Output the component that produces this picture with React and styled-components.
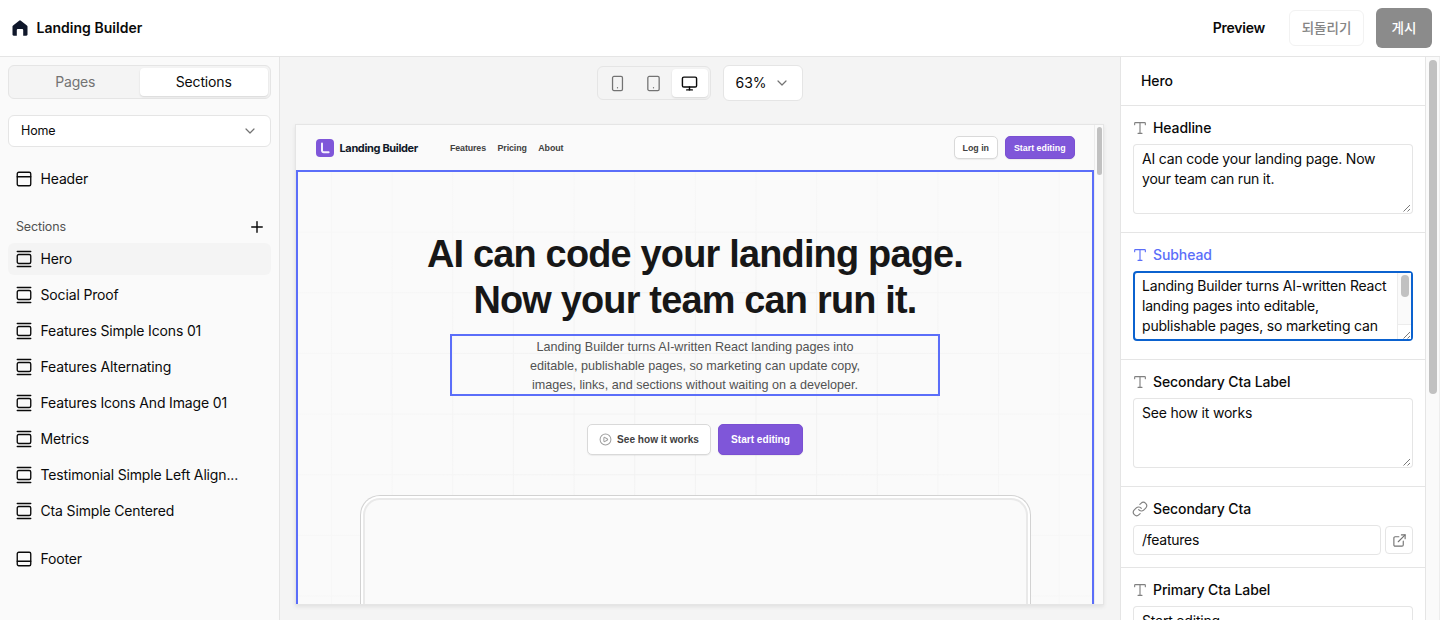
import React from 'react';
import styled, {createGlobalStyle, css} from 'styled-components';
import {
  ChevronDown,
  CirclePlay,
  ExternalLink,
  GalleryVertical,
  Link,
  Monitor,
  PanelBottom,
  PanelTop,
  Plus,
  Smartphone,
  Tablet,
  Type
} from 'lucide-react';

const BORDER_COLOR = "#e5e5e5";
const TEXT_COLOR = "#0a0a0a";
const MUTED_COLOR = "#737373";
const SELECT_COLOR = "#5b6ef9";
const BRAND_COLOR = "#7f56d9";

const GlobalStyle = createGlobalStyle`
  * {
    box-sizing: border-box;
  }
  body {
    margin: 0;
    overflow: hidden;
    color: ${TEXT_COLOR};
    font-family: Inter, "Noto Sans CJK KR", sans-serif;
    font-size: 14px;
    line-height: 20px;
  }
  svg {
    display: block;
    flex-shrink: 0;
  }
`;

const Page = styled.div`
  height: 620px;
  display: flex;
  flex-direction: column;
  overflow: hidden;
`;

const TopBar = styled.header`
  height: 57px;
  flex-shrink: 0;
  display: flex;
  align-items: center;
  justify-content: space-between;
  padding: 0 8px 0 12px;
  border-bottom: 1px solid ${BORDER_COLOR};
  background: #fff;
`;

const Brand = styled.div`
  display: flex;
  align-items: center;
  gap: 8.5px;
  font-weight: 600;
  letter-spacing: 0.02px;
`;

const TopActions = styled.div`
  display: flex;
  align-items: center;
`;

const PreviewLink = styled.span`
  font-weight: 600;
  letter-spacing: -0.25px;
  margin-right: 24px;
`;

const RevertButton = styled.button`
  width: 75px;
  height: 36px;
  margin-right: 12px;
  padding: 0 0 2px;
  border: 1px solid #f2f2f2;
  border-radius: 6px;
  background: #fff;
  color: #858585;
  font: 500 13.5px/20px "Noto Sans CJK KR", sans-serif;
`;

const PublishButton = styled.button`
  width: 56px;
  height: 40px;
  padding: 0 0 2px;
  border: 0;
  border-radius: 6px;
  background: #8b8b8b;
  color: #fff;
  font: 500 13.5px/20px "Noto Sans CJK KR", sans-serif;
`;

const Body = styled.div`
  flex: 1;
  min-height: 0;
  display: flex;
`;

// Left sidebar

const Sidebar = styled.aside`
  width: 280px;
  flex-shrink: 0;
  padding: 8px;
  border-right: 1px solid ${BORDER_COLOR};
  background: #fafafa;
  letter-spacing: -0.15px;
`;

const Tabs = styled.div`
  height: 34px;
  display: flex;
  padding: 2px;
  border: 1px solid ${BORDER_COLOR};
  border-radius: 6px;
  background: #f4f4f4;
`;

const Tab = styled.div`
  flex: 1;
  display: flex;
  align-items: center;
  justify-content: center;
  border-radius: 4px;
  color: ${MUTED_COLOR};
  ${props => props.$active && css`
    color: ${TEXT_COLOR};
    background: #fff;
    box-shadow: 0 1px 2px rgba(0, 0, 0, 0.12);
  `}
`;

const PageSelect = styled.div`
  height: 32px;
  margin: 16px 0;
  padding: 0 12px;
  display: flex;
  align-items: center;
  justify-content: space-between;
  border: 1px solid ${BORDER_COLOR};
  border-radius: 6px;
  background: #fff;
  font-size: 12.5px;
`;

const SectionRow = styled.div`
  height: 32px;
  display: flex;
  align-items: center;
  gap: 7.5px;
  padding: 0 8px 0 7px;
  border-radius: 6px;
  background: ${props => props.$active ? "#f4f4f4" : "transparent"};
`;

const ListHeading = styled.div`
  height: 32px;
  margin-top: 16px;
  padding: 0 5px 0 8px;
  display: flex;
  align-items: center;
  justify-content: space-between;
  color: #525252;
  font-size: 12.5px;
`;

const SectionList = styled.div`
  display: flex;
  flex-direction: column;
  gap: 4px;
  margin-bottom: 16px;
`;

// Canvas

const Canvas = styled.main`
  flex: 1;
  min-width: 0;
  display: flex;
  flex-direction: column;
  align-items: center;
  padding: 8px 16px 15px 15px;
  background: #f4f4f4;
`;

const Toolbar = styled.div`
  height: 36px;
  flex-shrink: 0;
  display: flex;
  align-items: center;
  gap: 12px;
  margin-bottom: 23px;
`;

const DeviceGroup = styled.div`
  height: 34px;
  width: 114px;
  padding: 2px;
  display: flex;
  border: 1px solid ${BORDER_COLOR};
  border-radius: 6px;
`;

const DeviceButton = styled.div`
  flex: 1;
  display: flex;
  align-items: center;
  justify-content: center;
  border-radius: 4px;
  color: ${MUTED_COLOR};
  ${props => props.$active && css`
    color: ${TEXT_COLOR};
    background: #fff;
    box-shadow: 0 1px 2px rgba(0, 0, 0, 0.12);
  `}
`;

const ZoomButton = styled.div`
  width: 80px;
  height: 36px;
  padding: 0 12px;
  display: flex;
  align-items: center;
  justify-content: space-between;
  border: 1px solid ${BORDER_COLOR};
  border-radius: 6px;
  background: #fff;
`;

const Frame = styled.div`
  width: 809px;
  flex: 1;
  min-height: 0;
  display: flex;
  border: 1px solid ${BORDER_COLOR};
  background: #fafafa;
  box-shadow: 0 2px 4px rgba(0, 0, 0, 0.08);
  font-family: "Liberation Sans", Arial, sans-serif;
`;

const Site = styled.div`
  width: 798px;
  flex-shrink: 0;
  display: flex;
  flex-direction: column;
  overflow: hidden;
`;

const FrameScroll = styled.div`
  width: 9px;
  padding: 2px 0 0 1.5px;
  border-left: 1px solid #ececec;
`;

const FrameThumb = styled.div`
  width: 5px;
  height: 48px;
  border-radius: 3px;
  background: #c1c1c1;
`;

const SiteHeader = styled.div`
  height: 45px;
  flex-shrink: 0;
  display: flex;
  align-items: center;
  padding: 0 19.5px 0 20px;
`;

const SiteName = styled.span`
  margin: 1px 32px 0 5.5px;
  color: #101828;
  font: 700 11px/16px Inter, sans-serif;
  letter-spacing: -0.36px;
`;

const SiteNav = styled.nav`
  flex: 1;
  display: flex;
  gap: 11.5px;
  color: #414141;
  font-size: 8.85px;
  font-weight: 700;
  letter-spacing: -0.1px;
`;

const SiteButton = styled.button`
  height: ${props => props.$large ? 31 : 23}px;
  width: ${props => props.$width}px;
  padding: 0;
  display: flex;
  align-items: center;
  justify-content: center;
  gap: 5px;
  border: 1px solid ${props => props.$primary ? "#7a50d2" : "#d9d9d9"};
  border-radius: 5px;
  background: ${props => props.$primary ? BRAND_COLOR : "#fff"};
  color: ${props => props.$primary ? "#fff" : "#414141"};
  box-shadow: 0 1px 1px rgba(0, 0, 0, 0.06);
  font: 700 ${props => props.$large ? 10.1 : 8.85}px/16px "Liberation Sans", Arial, sans-serif;
`;

const HeaderButtons = styled.div`
  display: flex;
  gap: 7px;
`;

const Hero = styled.section`
  flex: 1;
  min-height: 0;
  display: flex;
  flex-direction: column;
  align-items: center;
  padding-top: 60px;
  overflow: hidden;
  border: 2px solid ${SELECT_COLOR};
  border-bottom: 0;
  background-image:
    radial-gradient(closest-side, transparent 40%, rgba(250, 250, 250, 0.6) 100%),
    linear-gradient(to right, #f2f2f2 1px, transparent 1px),
    linear-gradient(to bottom, #f2f2f2 1px, transparent 1px);
  background-size: 100% 100%, 60.65px 60.65px, 60.65px 60.65px;
  background-position: 0 0, 33px -1px, 33px -1px;
`;

const Headline = styled.h1`
  margin: 0;
  color: #171717;
  font-size: 37.9px;
  line-height: 45.5px;
  font-weight: 700;
  text-align: center;
  white-space: nowrap;
  letter-spacing: -0.8px;
`;

const Subhead = styled.p`
  width: 490px;
  height: 62px;
  margin: 11px 0 28px;
  padding-top: 2px;
  border: 2px solid ${SELECT_COLOR};
  color: #525252;
  font-size: 12.6px;
  line-height: 19px;
  text-align: center;
`;

const CtaRow = styled.div`
  display: flex;
  gap: 7px;
  margin-bottom: 40px;
`;

const Mockup = styled.div`
  width: 671px;
  flex: 1;
  padding: 2px 2px 0;
  border: 1px solid #d2d2d2;
  border-bottom: 0;
  border-radius: 20px 20px 0 0;
  background: #fff;
`;

const MockupScreen = styled.div`
  height: 100%;
  border: 2px solid #e9e9e9;
  border-bottom: 0;
  border-radius: 17px 17px 0 0;
  background: #fafafa;
`;

// Inspector

const Inspector = styled.aside`
  width: 305px;
  flex-shrink: 0;
  overflow: hidden;
  border-left: 1px solid ${BORDER_COLOR};
  background: #fff;
`;

const InspectorTitle = styled.div`
  height: 49px;
  display: flex;
  align-items: center;
  padding-left: 20px;
  border-bottom: 1px solid ${BORDER_COLOR};
  font-weight: 500;
  letter-spacing: -0.1px;
`;

const FieldBlock = styled.div`
  padding: 12px 12px ${props => props.$compact ? 12 : 18}px;
  border-bottom: 1px solid ${BORDER_COLOR};
`;

const FieldLabel = styled.div`
  display: flex;
  align-items: center;
  gap: 5px;
  margin-bottom: 6px;
  font-weight: 500;
  letter-spacing: -0.1px;
  color: ${props => props.$selected ? SELECT_COLOR : TEXT_COLOR};
  svg {
    margin-left: -1px;
    color: ${props => props.$selected ? SELECT_COLOR : "#808080"};
  }
`;

const TextArea = styled.div`
  position: relative;
  width: 280px;
  height: 70px;
  padding: 5px 9px;
  overflow: hidden;
  white-space: pre;
  letter-spacing: -0.19px;
  border-radius: 4px;
  box-shadow: inset 0 0 0 ${props => props.$focused ? "2px #0b62cf" : `1px ${BORDER_COLOR}`};
`;

const ResizeGrip = styled.svg`
  position: absolute;
  right: 2px;
  bottom: 2px;
`;

const AreaScroll = styled.div`
  position: absolute;
  top: 2px;
  right: 2px;
  bottom: 2px;
  width: 14px;
  padding: 2px 0 0 3px;
  border-left: 1px solid #ececec;
  background: linear-gradient(#fafafa 51px, #ececec 51px, #ececec 52px, #fff 52px);
`;

const AreaThumb = styled.div`
  width: 8px;
  height: 22px;
  border-radius: 4px;
  background: #c1c1c1;
`;

const LinkRow = styled.div`
  display: flex;
  align-items: center;
  gap: 4px;
`;

const Input = styled.div`
  width: 248px;
  height: 30px;
  padding: 4px 8px;
  border: 1px solid ${BORDER_COLOR};
  border-radius: 4px;
  letter-spacing: -0.25px;
`;

const OpenButton = styled.div`
  width: 28px;
  height: 28px;
  display: flex;
  align-items: center;
  justify-content: center;
  border: 1px solid ${BORDER_COLOR};
  border-radius: 4px;
  color: ${MUTED_COLOR};
`;

const PanelScroll = styled.div`
  width: 15px;
  flex-shrink: 0;
  padding: 3px 0 0 3px;
  border-left: 1px solid ${BORDER_COLOR};
  border-right: 1px solid #ededed;
  background: #fafafa;
`;

const PanelThumb = styled.div`
  width: 8px;
  height: 334px;
  border-radius: 4px;
  background: #c1c1c1;
`;

const SECTIONS = [
  "Hero",
  "Social Proof",
  "Features Simple Icons 01",
  "Features Alternating",
  "Features Icons And Image 01",
  "Metrics",
  "Testimonial Simple Left Align...",
  "Cta Simple Centered"
];

const HomeIcon = () => (
    <svg width="16" height="16" viewBox="0 0 16 16">
      <path fill="#0f172a" d="M7.1.7a1.5 1.5 0 0 1 1.8 0l6 4.7c.4.3.6.7.6 1.2v7.900c0 .7-.5 1.200-1.200 1.200h-3.100V10.200c0-.8-.5-1.300-1.300-1.300H6.100c-.8 0-1.300.5-1.300 1.300v5.500H1.700c-.7 0-1.200-.5-1.200-1.200V6.600c0-.5.2-.9.6-1.200z"/>
    </svg>
);

const SiteLogo = () => (
    <svg width="18" height="18" viewBox="0 0 18 18">
      <rect width="18" height="18" rx="4" fill={BRAND_COLOR}/>
      <path d="M6 4.500v7a1.700 1.700 0 0 0 1.700 1.700h4.900" fill="none" stroke="#f4efff" strokeWidth="2" strokeLinecap="round"/>
    </svg>
);

const Grip = () => (
    <ResizeGrip width="8" height="8" viewBox="0 0 8 8">
      <path d="M0.500 7.500L7 1M4.500 7.500L7 5" stroke="#6b6b6b" strokeWidth="0.900" fill="none"/>
    </ResizeGrip>
);

const Field = ({label, selected, children, compact, icon: Icon = Type}) => (
    <FieldBlock $compact={compact}>
      <FieldLabel $selected={selected}>
        <Icon size={16} strokeWidth={1.7}/>
        {label}
      </FieldLabel>
      {children}
    </FieldBlock>
);

const SectionsPanel = () => (
    <Sidebar>
      <Tabs>
        <Tab>Pages</Tab>
        <Tab $active>Sections</Tab>
      </Tabs>
      <PageSelect>
        Home
        <ChevronDown size={16} strokeWidth={1.8} color={MUTED_COLOR}/>
      </PageSelect>
      <SectionRow>
        <PanelTop size={18} strokeWidth={1.8}/>
        Header
      </SectionRow>
      <ListHeading>
        Sections
        <Plus size={18} strokeWidth={1.9} color={TEXT_COLOR}/>
      </ListHeading>
      <SectionList>
        {SECTIONS.map((name, index) => (
            <SectionRow key={name} $active={index === 0}>
              <GalleryVertical size={18} strokeWidth={1.8}/>
              {name}
            </SectionRow>
        ))}
      </SectionList>
      <SectionRow>
        <PanelBottom size={18} strokeWidth={1.8}/>
        Footer
      </SectionRow>
    </Sidebar>
);

const SitePreview = () => (
    <Frame>
      <Site>
        <SiteHeader>
          <SiteLogo/>
          <SiteName>Landing Builder</SiteName>
          <SiteNav>
            <span>Features</span>
            <span>Pricing</span>
            <span>About</span>
          </SiteNav>
          <HeaderButtons>
            <SiteButton $width={44.5}>Log in</SiteButton>
            <SiteButton $width={69.5} $primary>Start editing</SiteButton>
          </HeaderButtons>
        </SiteHeader>
        <Hero>
          <Headline>AI can code your landing page.<br/>Now your team can run it.</Headline>
          <Subhead>
            Landing Builder turns AI-written React landing pages into<br/>
            editable, publishable pages, so marketing can update copy,<br/>
            images, links, and sections without waiting on a developer.
          </Subhead>
          <CtaRow>
            <SiteButton $width={124} $large>
              <CirclePlay size={13} strokeWidth={1.9} color="#a0a0a0"/>
              See how it works
            </SiteButton>
            <SiteButton $width={85} $large $primary>Start editing</SiteButton>
          </CtaRow>
          <Mockup>
            <MockupScreen/>
          </Mockup>
        </Hero>
      </Site>
      <FrameScroll>
        <FrameThumb/>
      </FrameScroll>
    </Frame>
);

const InspectorPanel = () => (
    <Inspector>
      <InspectorTitle>Hero</InspectorTitle>
      <Field label="Headline">
        <TextArea>
          {"AI can code your landing page. Now\nyour team can run it."}
          <Grip/>
        </TextArea>
      </Field>
      <Field label="Subhead" selected>
        <TextArea $focused>
          {"Landing Builder turns AI-written React\nlanding pages into editable,\npublishable pages, so marketing can"}
          <AreaScroll>
            <AreaThumb/>
          </AreaScroll>
          <Grip/>
        </TextArea>
      </Field>
      <Field label="Secondary Cta Label">
        <TextArea>
          See how it works
          <Grip/>
        </TextArea>
      </Field>
      <Field label="Secondary Cta" icon={Link} compact>
        <LinkRow>
          <Input>/features</Input>
          <OpenButton>
            <ExternalLink size={15} strokeWidth={1.8}/>
          </OpenButton>
        </LinkRow>
      </Field>
      <Field label="Primary Cta Label">
        <TextArea>Start editing</TextArea>
      </Field>
    </Inspector>
);

export default function App() {
  return (
      <Page>
        <GlobalStyle/>
        <TopBar>
          <Brand>
            <HomeIcon/>
            Landing Builder
          </Brand>
          <TopActions>
            <PreviewLink>Preview</PreviewLink>
            <RevertButton>되돌리기</RevertButton>
            <PublishButton>게시</PublishButton>
          </TopActions>
        </TopBar>
        <Body>
          <SectionsPanel/>
          <Canvas>
            <Toolbar>
              <DeviceGroup>
                <DeviceButton><Smartphone size={17} strokeWidth={1.8}/></DeviceButton>
                <DeviceButton><Tablet size={17} strokeWidth={1.8}/></DeviceButton>
                <DeviceButton $active><Monitor size={17} strokeWidth={2}/></DeviceButton>
              </DeviceGroup>
              <ZoomButton>
                63%
                <ChevronDown size={16} strokeWidth={1.8} color={MUTED_COLOR}/>
              </ZoomButton>
            </Toolbar>
            <SitePreview/>
          </Canvas>
          <InspectorPanel/>
          <PanelScroll>
            <PanelThumb/>
          </PanelScroll>
        </Body>
      </Page>
  );
}
